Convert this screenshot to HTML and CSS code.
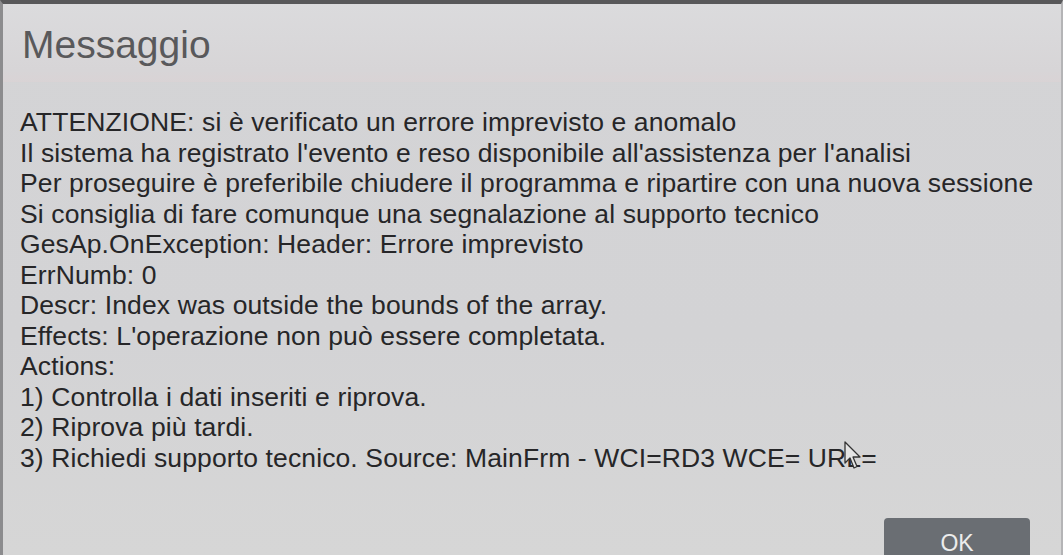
FILE: index.html
```html
<!DOCTYPE html>
<html lang="it">
<head>
<meta charset="utf-8">
<title>Messaggio</title>
<link rel="stylesheet" href="styles.css">
</head>
<body>
<div class="dialog">
  <div class="header">
    <h1 class="title">Messaggio</h1>
  </div>
  <div class="content">
    <div class="line">ATTENZIONE: si è verificato un errore imprevisto e anomalo</div>
    <div class="line">Il sistema ha registrato l'evento e reso disponibile all'assistenza per l'analisi</div>
    <div class="line">Per proseguire è preferibile chiudere il programma e ripartire con una nuova sessione</div>
    <div class="line">Si consiglia di fare comunque una segnalazione al supporto tecnico</div>
    <div class="line">GesAp.OnException: Header: Errore imprevisto</div>
    <div class="line">ErrNumb: 0</div>
    <div class="line">Descr: Index was outside the bounds of the array.</div>
    <div class="line">Effects: L'operazione non può essere completata.</div>
    <div class="line">Actions:</div>
    <div class="line">1) Controlla i dati inseriti e riprova.</div>
    <div class="line">2) Riprova più tardi.</div>
    <div class="line">3) Richiedi supporto tecnico. Source: MainFrm - WCI=RD3 WCE= URL=</div>
  </div>
  <div class="footer">
    <button class="ok">OK</button>
  </div>
  <svg class="cursor" width="20" height="30" viewBox="0 0 20 30">
    <path d="M1 1 L1 22 L6 17 L10 27 L13 25.5 L9 16 L16 16 Z" fill="#e4e4e4" stroke="#333" stroke-width="1.3" stroke-linejoin="round"/>
  </svg>
</div>
</body>
</html>
```

FILE: styles.css
```css
html, body {
  margin: 0;
  padding: 0;
  background: #4d4d4f;
}
.dialog {
  position: relative;
  box-sizing: border-box;
  width: 1063px;
  height: 555px;
  overflow: hidden;
  border-top: 4px solid #58585a;
  border-left: 3px solid #8c8c8e;
  border-right: 2px solid #b4b4b6;
  background: linear-gradient(180deg, #d4d4d6 0%, #d3d3d5 60%, #d6d6d6 100%);
  font-family: "Liberation Sans", Arial, sans-serif;
}
.header {
  height: 78px;
  box-sizing: border-box;
  padding: 19px 0 0 19px;
  background: linear-gradient(180deg, #dbdbdd 0%, #d7d5d7 85%, #d9d3d5 100%);
}
.title {
  margin: 0;
  font-weight: normal;
  font-size: 39px;
  line-height: 44px;
  color: #59595b;
}
.content {
  padding: 25px 0 0 17px;
  color: #262628;
  font-size: 26.5px;
  letter-spacing: 0.12px;
}
.line {
  line-height: 30.5px;
  height: 30.5px;
  white-space: nowrap;
}
.footer {
  display: flex;
  justify-content: flex-end;
  padding: 45px 31px 0 0;
}
.ok {
  width: 146px;
  height: 44px;
  border: none;
  border-radius: 4px;
  background: #6a6e73;
  color: #ececec;
  font-family: "Liberation Sans", Arial, sans-serif;
  font-size: 23px;
  padding: 6px 0 0 0;
}
.cursor {
  position: absolute;
  left: 841px;
  top: 437px;
}
```
